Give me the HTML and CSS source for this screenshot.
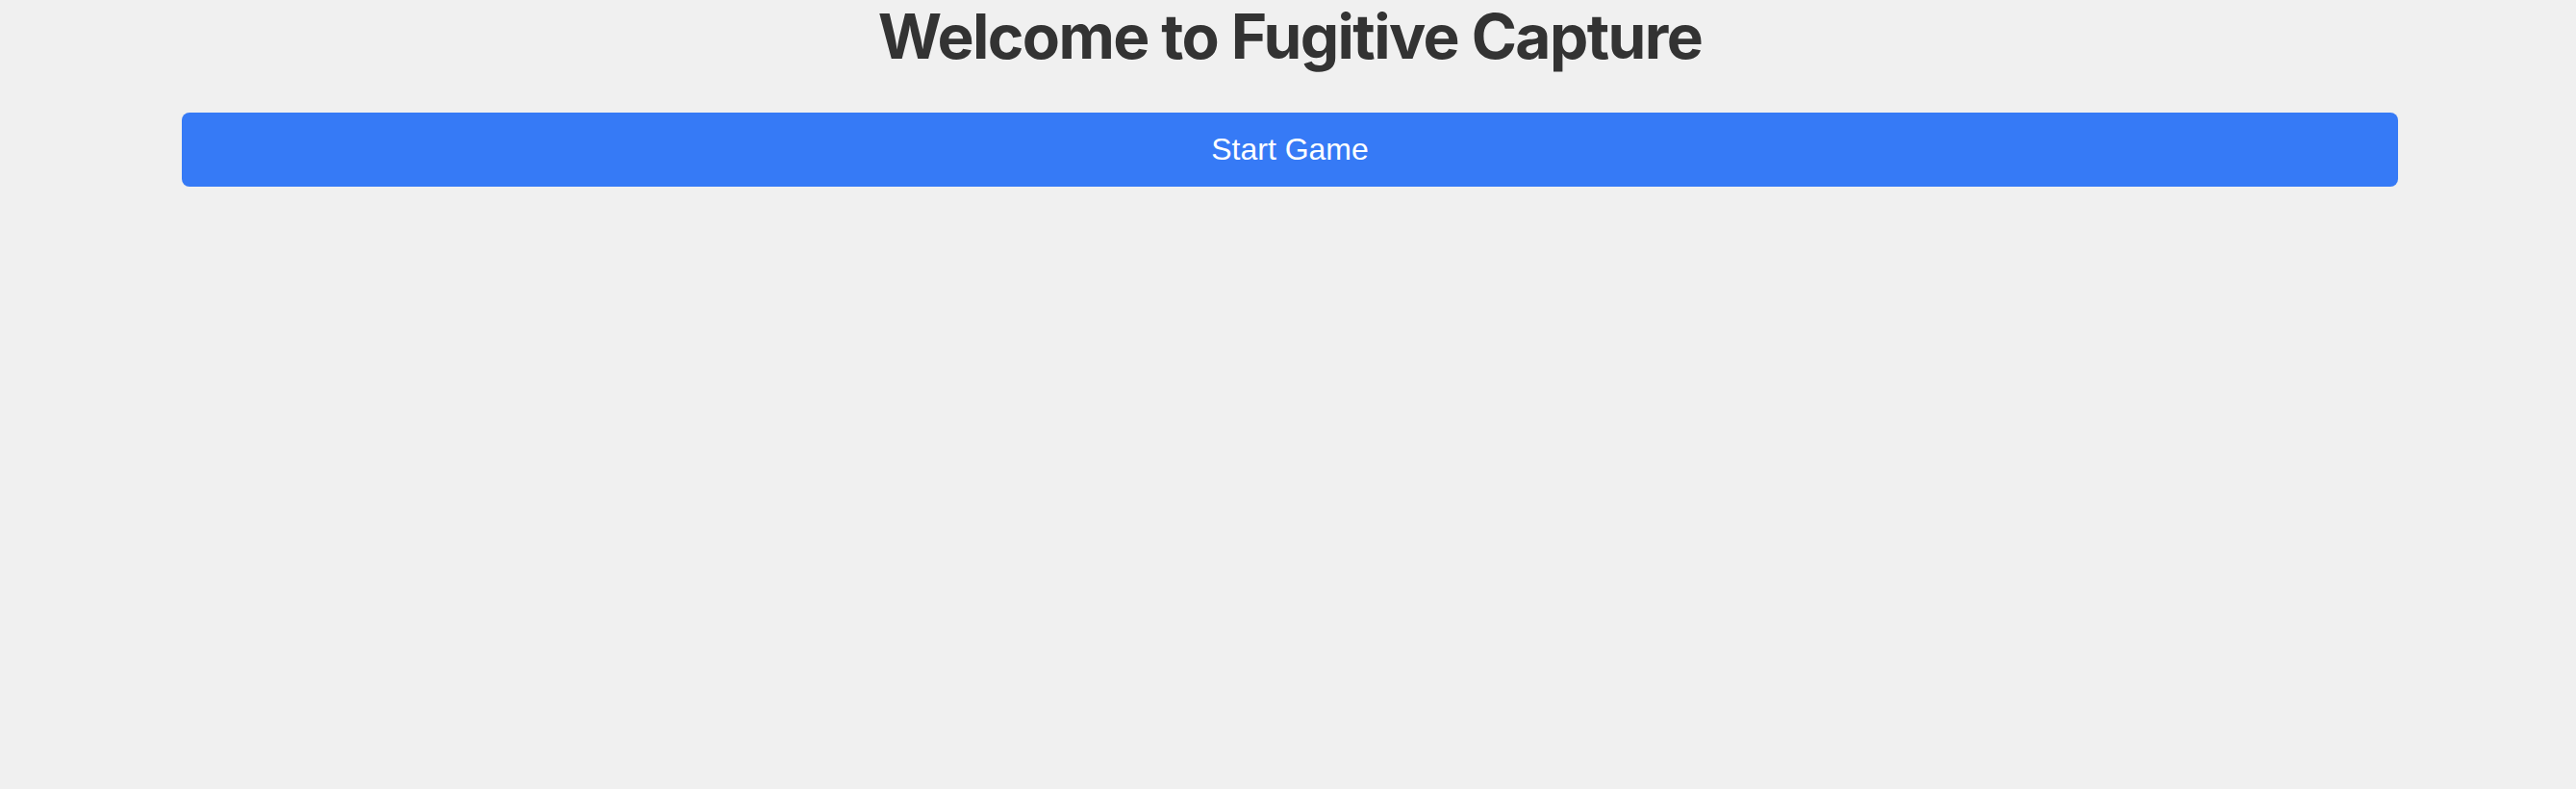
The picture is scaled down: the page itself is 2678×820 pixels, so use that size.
FILE: index.html
```html
<!DOCTYPE html>
<html lang="en">
<head>
<meta charset="utf-8">
<title>Fugitive Capture</title>
<link rel="stylesheet" href="styles.css">
</head>
<body>
  <main class="page">
    <h1 class="title">Welcome to Fugitive Capture</h1>
    <button class="start-btn" type="button">Start Game</button>
  </main>
</body>
</html>
```

FILE: styles.css
```css
html, body {
  margin: 0;
  padding: 0;
  background: #f0f0f0;
}

body {
  font-family: Inter, "Liberation Sans", Arial, sans-serif;
  color: #333333;
}

.page {
  display: flex;
  flex-direction: column;
  align-items: center;
  padding: 0 0 0 4px;
}

.title {
  margin: 0;
  font-family: Inter, "Liberation Sans", Arial, sans-serif;
  font-size: 64px;
  font-weight: 700;
  letter-spacing: -1.6px;
  line-height: 75px;
  color: #333333;
  text-align: center;
}

.start-btn {
  margin-top: 42px;
  width: 2304px;
  padding: 20px 0;
  border: none;
  border-radius: 8px;
  background: #367af6;
  color: #ffffff;
  font-family: "Liberation Sans", Arial, sans-serif;
  font-size: 32px;
  line-height: normal;
  cursor: pointer;
}
```
